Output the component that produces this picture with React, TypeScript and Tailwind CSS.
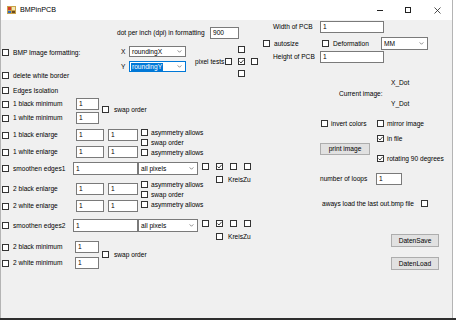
import type { ReactNode } from 'react'

function Box({ checked }: { checked?: boolean }) {
  return (
    <span className="flex h-[7px] w-[7px] shrink-0 items-center justify-center border border-[#333333] bg-white">
      {checked && (
        <svg viewBox="0 0 5 5" className="h-[5px] w-[5px]">
          <path d="M0.5 2.5 L2 4 L4.6 0.9" fill="none" stroke="#111" strokeWidth="0.8" />
        </svg>
      )}
    </span>
  )
}

// checkbox followed by its caption
function Check({
  label,
  checked,
  gap = 'gap-[4px]',
  className = '',
}: {
  label?: string
  checked?: boolean
  gap?: string
  className?: string
}) {
  return (
    <div className={`flex items-center whitespace-nowrap leading-[8px] ${gap} ${className}`}>
      <Box checked={checked} />
      {label && <span>{label}</span>}
    </div>
  )
}

function Label({ children, className = '' }: { children: ReactNode; className?: string }) {
  return <span className={`shrink-0 whitespace-nowrap leading-[8px] ${className}`}>{children}</span>
}

function TextBox({ value, className }: { value: string; className: string }) {
  return (
    <div className={`flex shrink-0 items-center border border-[#7a7a7a] bg-white pl-[2px] leading-[8px] ${className}`}>
      {value}
    </div>
  )
}

function Combo({ value, className, focused }: { value: string; className: string; focused?: boolean }) {
  return (
    <div
      className={`flex shrink-0 items-center justify-between bg-white pl-[1px] pr-[3px] leading-[8px] ${
        focused ? 'border border-[#0078d7]' : 'border border-[#7a7a7a]'
      } ${className}`}
    >
      <span className={focused ? 'bg-[#0078d7] px-[1px] text-white' : 'px-[1px]'}>{value}</span>
      <svg viewBox="0 0 6 4" className="h-[3px] w-[5px]">
        <path d="M0.5 0.5 L3 3 L5.5 0.5" fill="none" stroke="#444" strokeWidth="0.8" />
      </svg>
    </div>
  )
}

function Button({ label, className }: { label: string; className: string }) {
  return (
    <div className={`flex shrink-0 items-center justify-center border border-[#adadad] bg-[#e1e1e1] leading-[8px] ${className}`}>
      {label}
    </div>
  )
}

function AppIcon() {
  return (
    <svg viewBox="0 0 9 10" className="h-[10px] w-[9px]">
      <rect x="0" y="1" width="9" height="8" fill="#c9a24a" />
      <rect x="1" y="2" width="3" height="3" fill="#d43b2a" />
      <rect x="5" y="2" width="3" height="3" fill="#f3e6b0" />
      <rect x="1" y="6" width="3" height="2" fill="#2d6bc4" />
      <rect x="5" y="6" width="3" height="2" fill="#6b4a1e" />
    </svg>
  )
}

function TitleBar() {
  return (
    <div className="flex h-[20px] shrink-0 items-center bg-white pl-[6px]">
      <AppIcon />
      <span className="ml-[4px] text-[7.2px]">BMPinPCB</span>
      <div className="ml-auto flex h-full items-center">
        <div className="flex h-full w-[28px] items-center justify-center">
          <span className="h-px w-[6px] bg-[#222]" />
        </div>
        <div className="flex h-full w-[28px] items-center justify-center">
          <span className="h-[6px] w-[6px] border border-[#222]" />
        </div>
        <div className="flex h-full w-[30px] items-center justify-center">
          <svg viewBox="0 0 7 7" className="h-[7px] w-[7px]">
            <path d="M0.5 0.5 L6.5 6.5 M6.5 0.5 L0.5 6.5" stroke="#222" strokeWidth="0.8" />
          </svg>
        </div>
      </div>
    </div>
  )
}

// two rows of "n black/white enlarge" with the asymmetry options beside them
function EnlargeGroup({ n, className, checksClass }: { n: string; className: string; checksClass: string }) {
  return (
    <div className={`flex items-start ${className}`}>
      <div className="flex flex-col gap-[5px]">
        {['black', 'white'].map((c) => (
          <div key={c} className="flex h-[12px] items-center">
            <Check label={`${n} ${c} enlarge`} className="w-[75px] pl-[1px]" />
            <TextBox value="1" className="h-[12px] w-[28px]" />
            <TextBox value="1" className="ml-[4px] h-[12px] w-[30px]" />
          </div>
        ))}
      </div>
      <div className={`ml-[3px] flex flex-col gap-[3px] ${checksClass}`}>
        <Check label="asymmetry allows" gap="gap-[3px]" className="h-[7px]" />
        <Check label="swap order" gap="gap-[3px]" className="h-[7px]" />
        <Check label="asymmetry allows" gap="gap-[3px]" className="h-[7px]" />
      </div>
    </div>
  )
}

function SmoothenRow({ n, className }: { n: string; className: string }) {
  return (
    <div className={`flex h-[13px] items-start ${className}`}>
      <Check label={`smoothen edges${n}`} className="h-[13px] w-[72px] pl-[1px]" />
      <TextBox value="1" className="h-[13px] w-[65px]" />
      <Combo value="all pixels" className="h-[13px] w-[60px]" />
      <div className="ml-[4px] mt-[1px] flex flex-col">
        <div className="flex gap-[7px]">
          <Box />
          <Box checked />
          <Box />
          <Box />
        </div>
        <Check label="KreisZu" gap="gap-[5px]" className="mt-[6px] h-[7px] pl-[14px]" />
      </div>
    </div>
  )
}

function MinimumGroup({ n, className, labelW, tbW, rowGap }: { n: string; className: string; labelW: string; tbW: string; rowGap: string }) {
  return (
    <div className={`flex items-start ${className}`}>
      <div className={`flex flex-col ${rowGap}`}>
        {['black', 'white'].map((c) => (
          <div key={c} className="flex h-[12px] items-center">
            <Check label={`${n} ${c} minimum`} className={`${labelW} pl-[1px]`} />
            <TextBox value="1" className={`h-[12px] ${tbW}`} />
          </div>
        ))}
      </div>
    </div>
  )
}

function LeftPanel() {
  return (
    <div className="flex w-[259px] shrink-0 flex-col">
      {/* top: formatting block */}
      <div className="flex h-[64px]">
        <div className="flex w-[115px] flex-col">
          <Check label="BMP Image formatting:" className="mt-[28px] h-[9px] pl-[1px]" />
          <Check label="delete white border" className="mt-[14px] h-[9px] pl-[1px]" />
        </div>
        <div className="flex flex-col">
          <div className="mt-[7px] flex h-[12px] items-center pl-[1px]">
            <Label className="w-[93px]">dot per inch (dpi) in formatting</Label>
            <TextBox value="900" className="h-[12px] w-[29px]" />
          </div>
          <div className="mt-[7px] flex items-start">
            <div className="flex flex-col gap-[4px] pl-[5px]">
              <div className="flex h-[11px] items-center">
                <Label className="w-[8px]">X</Label>
                <Combo value="roundingX" className="h-[11px] w-[57px]" />
              </div>
              <div className="flex h-[11px] items-center">
                <Label className="w-[8px]">Y</Label>
                <Combo value="roundingY" focused className="h-[11px] w-[57px]" />
              </div>
            </div>
            <div className="ml-[9px] flex items-center">
              <Label className="w-[30px]">pixel tests</Label>
              <div className="grid grid-cols-[7px_7px_7px] gap-x-[6px] gap-y-[5px]">
                <span />
                <Box />
                <span />
                <Box />
                <Box checked />
                <Box />
                <span />
                <Box />
                <span />
              </div>
            </div>
          </div>
        </div>
      </div>

      <Check label="Edges Isolation" className="mt-[2px] h-[9px] pl-[1px]" />

      <div className="mt-[3px] flex items-start">
        <MinimumGroup n="1" className="" labelW="w-[75px]" tbW="w-[23px]" rowGap="gap-[2px]" />
        <Check label="swap order" gap="gap-[5px]" className="ml-[3px] mt-[7px] h-[9px]" />
      </div>

      <EnlargeGroup n="1" className="mt-[5px]" checksClass="" />
      <SmoothenRow n="1" className="mt-[4px]" />
      <EnlargeGroup n="2" className="mt-[8px]" checksClass="-mt-[2px]" />
      <SmoothenRow n="2" className="mt-[7px]" />

      <div className="mt-[9px] flex items-start">
        <MinimumGroup n="2" className="" labelW="w-[74px]" tbW="w-[24px]" rowGap="gap-[4px]" />
        <Check label="swap order" gap="gap-[5px]" className="ml-[3px] mt-[9px] h-[9px]" />
      </div>
    </div>
  )
}

function RightPanel() {
  return (
    <div className="flex flex-1 flex-col">
      <div className="mt-[1px] flex h-[12px] items-center pl-[13px]">
        <Label className="w-[47px]">Width of PCB</Label>
        <TextBox value="1" className="h-[12px] w-[64px]" />
      </div>
      <div className="mt-[4px] flex h-[13px] items-center pl-[3px]">
        <Check label="autosize" className="w-[59px]" />
        <Check label="Deformation" className="w-[59px]" />
        <Combo value="MM" className="h-[13px] w-[47px]" />
      </div>
      <div className="mt-[1px] flex h-[12px] items-center pl-[13px]">
        <Label className="w-[47px]">Height of PCB</Label>
        <TextBox value="1" className="h-[12px] w-[64px]" />
      </div>

      <div className="mt-[16px] flex items-center pl-[79px]">
        <Label className="w-[52px]">Current image:</Label>
        <div className="flex flex-col gap-[13px]">
          <Label>X_Dot</Label>
          <Label>Y_Dot</Label>
        </div>
      </div>

      <div className="mt-[11px] flex items-start pl-[60px]">
        <div className="flex w-[57px] flex-col">
          <Check label="invert colors" gap="gap-[3px]" className="h-[9px] pl-[1px]" />
          <Button label="print image" className="mt-[15px] h-[12px] w-[50px]" />
        </div>
        <div className="flex flex-col">
          <Check label="mirror image" gap="gap-[3px]" className="h-[9px]" />
          <Check label="in file" checked gap="gap-[3px]" className="mt-[6px] h-[9px]" />
          <Check label="rotating 90 degrees" checked gap="gap-[3px]" className="mt-[11px] h-[9px]" />
        </div>
      </div>

      <div className="mt-[10px] flex h-[12px] items-center pl-[60px]">
        <Label className="w-[56px]">number of loops</Label>
        <TextBox value="1" className="h-[12px] w-[26px]" />
      </div>

      <div className="mt-[14px] flex h-[9px] items-center pl-[62px]">
        <Label className="w-[99px]">aways load the last out.bmp file</Label>
        <Box />
      </div>

      <div className="mt-[26px] flex flex-col gap-[10px] pl-[131px]">
        <Button label="DatenSave" className="h-[13px] w-[48px]" />
        <Button label="DatenLoad" className="h-[13px] w-[48px]" />
      </div>
    </div>
  )
}

export default function App() {
  return (
    <div className="flex h-[320px] w-[456px] flex-col bg-white font-['Liberation_Sans',Arial,sans-serif] text-[6.6px] text-black">
      <div className="flex h-[318px] w-[453px] flex-col border-x border-[#b4b4b4] bg-[#f0f0f0]">
        <TitleBar />
        <div className="flex flex-1">
          <LeftPanel />
          <RightPanel />
        </div>
      </div>
      <div className="h-[2px] w-full bg-[#2e2e2e]" />
    </div>
  )
}
